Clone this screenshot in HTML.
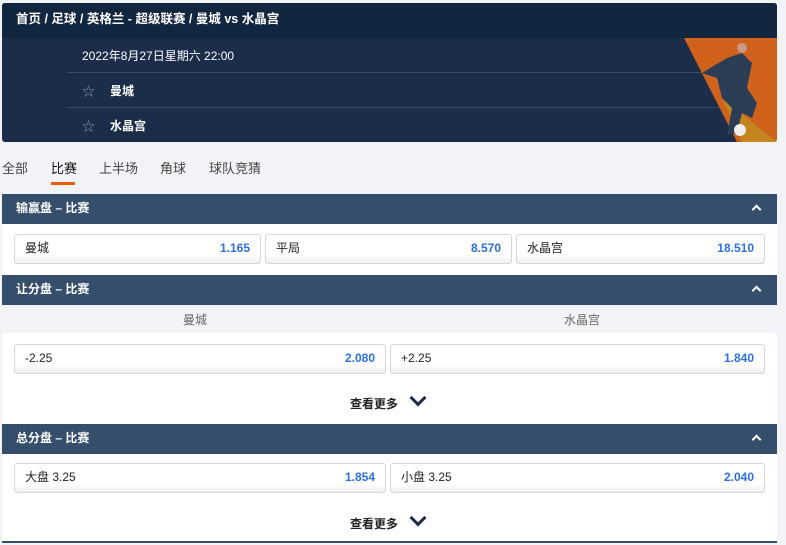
<!DOCTYPE html>
<html><head><meta charset="utf-8"><style>
*{margin:0;padding:0;box-sizing:border-box}
body{width:786px;height:545px;background:#f2f3f7;font-family:"Liberation Sans","Noto Sans CJK SC",sans-serif;font-size:12px;position:relative;overflow:hidden}
.abs{position:absolute}
.hdr{left:2px;top:3px;width:775px;height:139px;background:#1b2d48;border-radius:3px;overflow:hidden}
.top{left:0;top:0;width:775px;height:35px;background:#13263f;color:#fff;font-weight:bold;font-size:12.5px;line-height:33px;padding-left:14px}
.line{height:1px;background:#3a4b63;left:65px;width:700px}
.sec{left:2px;width:775px;height:30px;background:#344e6b;color:#fff;font-weight:bold;font-size:12px;line-height:29px;padding-left:14px}
.chev{position:absolute;right:17px;top:12px;width:7px;height:7px;border-left:2.5px solid #fff;border-top:2.5px solid #fff;transform:rotate(45deg)}
.white{left:2px;width:775px;background:#fff}
.btn{height:30px;background:linear-gradient(#fff,#fff 70%,#f0f0f0);border:1px solid #d6d6d6;border-radius:3px;padding:0 10px;line-height:27px;font-size:12px;color:#222}
.btn b{float:right;color:#2d6fe0;font-weight:bold}
.more{font-weight:bold;font-size:12px;color:#222}
.more i{display:inline-block;width:12px;height:12px;border-right:3px solid #1b2d48;border-bottom:3px solid #1b2d48;transform:rotate(45deg);margin-left:14px;position:relative;top:-4px}
</style></head><body>
<div class="abs hdr">
 <div class="abs top">首页 / 足球 / 英格兰 - 超级联赛 / 曼城 vs 水晶宫</div>
 <div class="abs" style="left:80px;top:44px;color:#fff;font-size:12px">2022年8月27日星期六 22:00</div>
 <div class="abs line" style="top:69px"></div>
 <div class="abs" style="left:80px;top:78px;color:#8896a8;font-size:13px">☆</div>
 <div class="abs" style="left:108px;top:79px;color:#fff;font-weight:bold">曼城</div>
 <div class="abs line" style="top:104px"></div>
 <div class="abs" style="left:80px;top:113px;color:#8896a8;font-size:13px">☆</div>
 <div class="abs" style="left:108px;top:114px;color:#fff;font-weight:bold">水晶宫</div>
 <svg class="abs" style="left:680px;top:35px" width="95" height="104"><polygon points="2,0 95,0 95,104 55,104" fill="#d0621c"/><polygon points="40,60 95,104 60,104" fill="#c4851f"/><path d="M45,20 L60,15 L70,25 L65,50 L75,65 L70,80 L60,75 L55,95 L45,97 L50,70 L40,60 L35,40 L20,35Z" fill="#2b3e55"/><circle cx="60" cy="10" r="5" fill="#c98"/><circle cx="58" cy="92" r="6" fill="#eee"/></svg>
</div>
<div class="abs" style="left:2px;top:158px;font-size:13px;color:#444">全部</div>
<div class="abs" style="left:51px;top:158px;font-size:13px;color:#111">比赛</div>
<div class="abs" style="left:51px;top:182px;width:24px;height:3px;background:#f35a0e"></div>
<div class="abs" style="left:99px;top:158px;font-size:13px;color:#444">上半场</div>
<div class="abs" style="left:160px;top:158px;font-size:13px;color:#444">角球</div>
<div class="abs" style="left:209px;top:158px;font-size:13px;color:#444">球队竞猜</div>

<div class="abs sec" style="top:194px">输赢盘 – 比赛<span class="chev"></span></div>
<div class="abs white" style="top:224px;height:51px"></div>
<div class="abs btn" style="left:14px;top:234px;width:247px">曼城<b>1.165</b></div>
<div class="abs btn" style="left:265px;top:234px;width:247px">平局<b>8.570</b></div>
<div class="abs btn" style="left:516px;top:234px;width:249px">水晶宫<b>18.510</b></div>

<div class="abs sec" style="top:275px">让分盘 – 比赛<span class="chev"></span></div>
<div class="abs" style="left:183px;top:311px;color:#666">曼城</div>
<div class="abs" style="left:564px;top:311px;color:#666">水晶宫</div>
<div class="abs white" style="top:333px;height:91px"></div>
<div class="abs btn" style="left:14px;top:344px;width:372px">-2.25<b>2.080</b></div>
<div class="abs btn" style="left:390px;top:344px;width:375px">+2.25<b>1.840</b></div>
<div class="abs more" style="left:350px;top:395px">查看更多<i></i></div>

<div class="abs sec" style="top:424px">总分盘 – 比赛<span class="chev"></span></div>
<div class="abs white" style="top:454px;height:89px;border-bottom:2px solid #344e6b"></div>
<div class="abs btn" style="left:14px;top:463px;width:372px">大盘 3.25<b>1.854</b></div>
<div class="abs btn" style="left:390px;top:463px;width:375px">小盘 3.25<b>2.040</b></div>
<div class="abs more" style="left:350px;top:515px">查看更多<i></i></div>
</body></html>
